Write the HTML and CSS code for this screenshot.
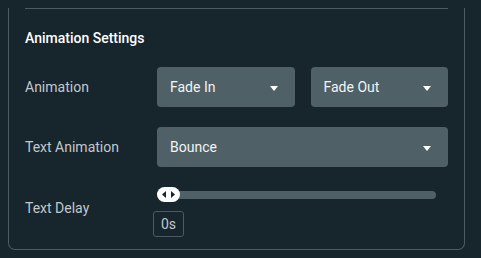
FILE: index.html
```html
<!DOCTYPE html>
<html lang="en">
<head>
  <meta charset="UTF-8">
  <title>Animation Settings</title>
  <link rel="stylesheet" href="styles.css">
</head>
<body>

  <div class="panel">
    <div class="divider"></div>

    <h3 class="section-title">Animation Settings</h3>

    <!-- 入场 / 出场动画 -->
    <div class="row">
      <div class="row-label">Animation</div>
      <div class="controls two">
        <div class="select">Fade In<span class="caret"></span></div>
        <div class="select">Fade Out<span class="caret"></span></div>
      </div>
    </div>

    <div class="row">
      <div class="row-label">Text Animation</div>
      <div class="controls">
        <div class="select">Bounce<span class="caret"></span></div>
      </div>
    </div>

    <div class="row delay-row">
      <div class="row-label">Text Delay</div>
      <div class="controls">
        <div class="slider">
          <div class="track"></div>
          <div class="handle">
            <svg width="13" height="7" viewBox="0 0 13 7">
              <polygon points="4,0 4,7 0,3.5" fill="#17252d"/>
              <polygon points="9,0 9,7 13,3.5" fill="#17252d"/>
            </svg>
          </div>
        </div>
        <div class="value-box">0s</div>
      </div>
    </div>
  </div>

</body>
</html>
```

FILE: styles.css
```css
body {
  margin: 0;
  padding: 0 16px 8px 8px;
  background-color: #17252d;
  font-family: Roboto, 'Liberation Sans', sans-serif;
  color: #fff;
}

.panel {
  border: 1px solid #4b5b62;
  border-top: none;
  border-radius: 0 0 7px 7px;
  padding: 0 16px 12px 16px;
}

.divider {
  height: 1px;
  background-color: #4b5b62;
  margin-top: 8px;
}

.section-title {
  margin: 21px 0 21px 0;
  font-size: 14px;
  line-height: 16px;
  font-weight: 500;
  color: #fff;
}

.row {
  display: flex;
  align-items: center;
  margin-bottom: 20px;
}

.row:last-child {
  margin-bottom: 0;
}

.row-label {
  width: 132px;
  flex-shrink: 0;
  font-size: 14px;
  color: #c3c8cb;
}

.controls {
  flex: 1;
  display: flex;
  flex-direction: column;
}

.controls.two {
  flex-direction: row;
  gap: 16px;
}

.controls.two .select {
  flex: 1;
}

.select {
  height: 40px;
  box-sizing: border-box;
  background-color: #4f6066;
  border-radius: 4px;
  padding: 0 17px 0 13px;
  display: flex;
  align-items: center;
  justify-content: space-between;
  font-size: 14px;
  color: #f2f4f5;
}

/* 下拉小三角 */
.caret {
  width: 0;
  height: 0;
  border-left: 4px solid transparent;
  border-right: 4px solid transparent;
  border-top: 5px solid #fff;
  margin-top: 2px;
}

.delay-row .row-label {
  margin-top: -9px;
}

.slider {
  position: relative;
  height: 15px;
  margin-right: 12px;
}

.track {
  position: absolute;
  left: 0;
  right: 0;
  top: 4px;
  height: 8px;
  border-radius: 4px;
  background-color: #4f6066;
}

.handle {
  position: absolute;
  left: 0;
  top: 0;
  width: 23px;
  height: 15px;
  border-radius: 8px;
  background-color: #fff;
  display: flex;
  align-items: center;
  justify-content: center;
}

.value-box {
  align-self: flex-start;
  margin: 9px 0 0 -4px;
  width: 31px;
  height: 26px;
  box-sizing: border-box;
  border: 1px solid #4b5b62;
  border-radius: 3px;
  display: flex;
  align-items: center;
  justify-content: center;
  font-size: 14px;
  color: #c3c8cb;
}
```
